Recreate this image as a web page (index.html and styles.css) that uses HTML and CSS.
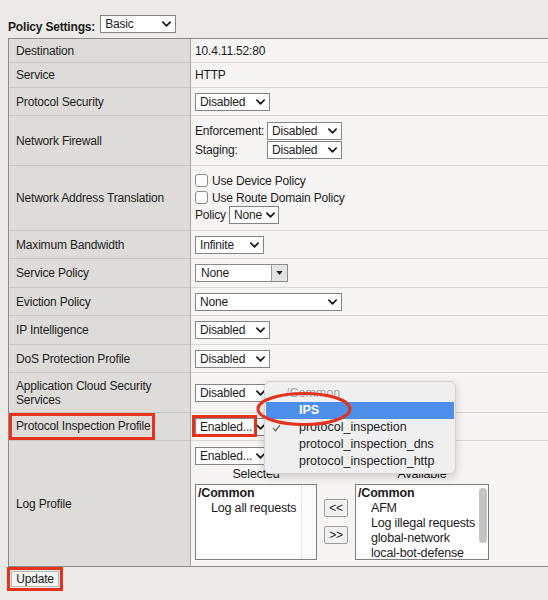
FILE: index.html
```html
<!DOCTYPE html>
<html>
<head>
<meta charset="utf-8">
<link rel="stylesheet" href="styles.css">
</head>
<body>
<div class="page">
  <div class="header">
    <span class="hlabel">Policy Settings:</span>
    <span class="sel w76"><span>Basic</span><svg class="chev" viewBox="0 0 10 6"><path d="M1 1l4 4 4-4"/></svg></span>
  </div>

  <div class="grid">
    <div class="lc">Destination</div>
    <div class="rc">10.4.11.52:80</div>

    <div class="lc">Service</div>
    <div class="rc">HTTP</div>

    <div class="lc">Protocol Security</div>
    <div class="rc"><span class="sel w75"><span>Disabled</span><svg class="chev" viewBox="0 0 10 6"><path d="M1 1l4 4 4-4"/></svg></span></div>

    <div class="lc">Network Firewall</div>
    <div class="rc">
      <div class="nf">
        <span>Enforcement:</span>
        <span class="sel w75"><span>Disabled</span><svg class="chev" viewBox="0 0 10 6"><path d="M1 1l4 4 4-4"/></svg></span>
        <span>Staging:</span>
        <span class="sel w75"><span>Disabled</span><svg class="chev" viewBox="0 0 10 6"><path d="M1 1l4 4 4-4"/></svg></span>
      </div>
    </div>

    <div class="lc">Network Address Translation</div>
    <div class="rc">
      <div class="nat">
        <div class="cbrow"><span class="cb"></span><span>Use Device Policy</span></div>
        <div class="cbrow"><span class="cb"></span><span>Use Route Domain Policy</span></div>
        <div class="polrow"><span>Policy</span><span class="sel w50 tight"><span>None</span><svg class="chev" viewBox="0 0 10 6"><path d="M1 1l4 4 4-4"/></svg></span></div>
      </div>
    </div>

    <div class="lc">Maximum Bandwidth</div>
    <div class="rc"><span class="sel w69"><span>Infinite</span><svg class="chev" viewBox="0 0 10 6"><path d="M1 1l4 4 4-4"/></svg></span></div>

    <div class="lc">Service Policy</div>
    <div class="rc">
      <span class="combo"><span class="combo-text">None</span><span class="combo-btn"><svg class="tri" viewBox="0 0 8 5"><path d="M0 0h8L4 5z"/></svg></span></span>
    </div>

    <div class="lc">Eviction Policy</div>
    <div class="rc"><span class="sel w147"><span>None</span><svg class="chev" viewBox="0 0 10 6"><path d="M1 1l4 4 4-4"/></svg></span></div>

    <div class="lc">IP Intelligence</div>
    <div class="rc"><span class="sel w75"><span>Disabled</span><svg class="chev" viewBox="0 0 10 6"><path d="M1 1l4 4 4-4"/></svg></span></div>

    <div class="lc">DoS Protection Profile</div>
    <div class="rc"><span class="sel w75"><span>Disabled</span><svg class="chev" viewBox="0 0 10 6"><path d="M1 1l4 4 4-4"/></svg></span></div>

    <div class="lc two">Application Cloud Security<br>Services</div>
    <div class="rc"><span class="sel w75"><span>Disabled</span><svg class="chev" viewBox="0 0 10 6"><path d="M1 1l4 4 4-4"/></svg></span></div>

    <div class="lc"><span class="redbox">Protocol Inspection Profile</span></div>
    <div class="rc">
      <span class="selwrap">
        <span class="sel w75"><span>Enabled...</span><svg class="chev" viewBox="0 0 10 6"><path d="M1 1l4 4 4-4"/></svg></span>
        <span class="redover"></span>
      </span>
    </div>

    <div class="lc last">Log Profile</div>
    <div class="rc last log">
      <span class="sel w75"><span>Enabled...</span><svg class="chev" viewBox="0 0 10 6"><path d="M1 1l4 4 4-4"/></svg></span>
      <div class="lprow">
        <div class="lpcol c1">
          <div class="lplabel">Selected</div>
          <div class="listbox">
            <div class="lbitems">
              <div class="grp">/Common</div>
              <div class="itm">Log all requests</div>
            </div>
            <div class="track line"></div>
          </div>
        </div>
        <div class="lpbtns">
          <span class="mbtn">&lt;&lt;</span>
          <span class="mbtn">&gt;&gt;</span>
        </div>
        <div class="lpcol c3">
          <div class="lplabel">Available</div>
          <div class="listbox">
            <div class="lbitems">
              <div class="grp">/Common</div>
              <div class="itm">AFM</div>
              <div class="itm">Log illegal requests</div>
              <div class="itm">global-network</div>
              <div class="itm">local-bot-defense</div>
            </div>
            <div class="track"><span class="thumb"></span></div>
          </div>
        </div>
      </div>
    </div>
  </div>

  <div class="footer">
    <button class="ubtn">Update</button>
  </div>
</div>

<div class="popup">
  <div class="pitem grey">/Common</div>
  <div class="pitem hl">IPS</div>
  <div class="pitem"><svg class="check" viewBox="0 0 9 8"><path d="M1 4.2l2.6 2.6L8 1"/></svg>protocol_inspection</div>
  <div class="pitem">protocol_inspection_dns</div>
  <div class="pitem">protocol_inspection_http</div>
</div>
<svg class="ellipse" viewBox="0 0 98 36"><ellipse cx="49" cy="18" rx="46" ry="15.5"/></svg>
</body>
</html>
```

FILE: styles.css
```css
html, body {
  margin: 0;
  padding: 0;
}
body {
  background: #ebeae6;
  font-family: "Liberation Sans", Arial, sans-serif;
  font-size: 12px;
  letter-spacing: -0.18px;
  color: #1c1c1c;
  width: 548px;
  height: 600px;
  overflow: hidden;
  position: relative;
}
.page {
  padding: 15px 0 0 8px;
}
.header {
  display: flex;
  align-items: flex-end;
  gap: 5px;
  height: 18px;
  margin-bottom: 5px;
}
.hlabel {
  font-weight: bold;
  line-height: 14px;
  margin-bottom: -1px;
}

/* select look-alike */
.sel {
  display: inline-flex;
  align-items: center;
  justify-content: space-between;
  box-sizing: border-box;
  height: 18px;
  border: 1px solid #848484;
  background: #fff;
  padding: 0 4px 0 4px;
  line-height: 14px;
  flex: none;
}
.sel.tight { padding: 0 3px 0 4px; }
.chev {
  width: 9px;
  height: 6px;
  flex: none;
}
.chev path {
  fill: none;
  stroke: #1a1a1a;
  stroke-width: 1.9;
  stroke-linecap: round;
  stroke-linejoin: round;
}
.w50 { width: 50px; }
.w69 { width: 69px; }
.w75 { width: 75px; }
.w76 { width: 76px; }
.w147 { width: 147px; }

/* grid */
.grid {
  display: grid;
  width: 540px;
  grid-template-columns: 182px 1fr;
  grid-template-rows: 24px 25px 28px 50px 65px 28px 29px 28px 29px 28px 40px 28px 126px;
  border-top: 1px solid #8c8b88;
  border-left: 1px solid #8c8b88;
}
.lc, .rc {
  box-sizing: border-box;
  display: flex;
  align-items: center;
}
.lc {
  background: #dedcd9;
  border-right: 1px solid #a9a8a5;
  border-bottom: 1px solid #c8c7c3;
  padding-left: 7px;
}
.lc.two {
  line-height: 14px;
}
.rc {
  background: #f6f5f3;
  border-bottom: 1px solid #d9d8d4;
  padding-left: 4px;
}
.lc.last, .rc.last {
  border-bottom: 1px solid #8c8b88;
}

.nf {
  display: grid;
  grid-template-columns: 72px auto;
  row-gap: 1px;
  align-items: center;
}
.nat {
  display: flex;
  flex-direction: column;
}
.cbrow {
  display: flex;
  align-items: center;
  height: 17px;
  gap: 4px;
}
.cb {
  width: 13px;
  height: 13px;
  box-sizing: border-box;
  border: 1px solid #8a8a8a;
  border-radius: 3px;
  background: #fff;
}
.polrow {
  display: flex;
  align-items: center;
  gap: 3px;
  height: 18px;
}

.combo {
  display: inline-flex;
  box-sizing: border-box;
  width: 93px;
  height: 18px;
  border: 1px solid #8a8a8a;
  background: #fff;
}
.combo-text {
  flex: 1;
  padding-left: 5px;
  line-height: 16px;
}
.combo-btn {
  width: 15px;
  border-left: 1px solid #9a9a9a;
  background: #e3e3e3;
  display: flex;
  align-items: center;
  justify-content: center;
}
.tri {
  width: 7px;
  height: 4px;
}
.tri path { fill: #222; }

/* annotations */
.redbox {
  margin-left: -7px;
  border: 3px solid #e5321c;
  padding: 3px 1px 4px 4px;
  line-height: 14px;
}
.selwrap {
  position: relative;
  display: inline-flex;
}
.redover {
  position: absolute;
  left: -3px;
  top: -3px;
  width: 65px;
  height: 22px;
  box-sizing: border-box;
  border: 3px solid #e5321c;
}

/* log profile */
.rc.log {
  flex-direction: column;
  align-items: flex-start;
  justify-content: flex-start;
  padding-top: 6px;
}
.lprow {
  display: flex;
  align-items: flex-start;
  margin-top: 2px;
}
.lpcol {
  display: flex;
  flex-direction: column;
}
.lpcol.c1 { width: 122px; }
.lpcol.c3 { width: 134px; margin-left: 7px; }
.lplabel {
  text-align: center;
  line-height: 14px;
  font-size: 12.5px;
  margin-bottom: 3px;
}
.listbox {
  box-sizing: border-box;
  height: 76px;
  border: 1px solid #7e7e7e;
  background: #fff;
  display: flex;
  overflow: hidden;
}
.lbitems {
  flex: 1;
  padding: 1px 0 0 2px;
  line-height: 15px;
  font-size: 12.5px;
  white-space: nowrap;
}
.grp { font-weight: bold; }
.itm { padding-left: 13px; }
.track {
  width: 14px;
  flex: none;
  position: relative;
}
.track.line {
  border-left: 1px solid #e3e3e3;
  background: #fbfbfb;
}
.thumb {
  position: absolute;
  left: 4px;
  top: 3px;
  width: 8px;
  height: 55px;
  border-radius: 4px;
  background: #c4c4c4;
}
.lpbtns {
  display: flex;
  flex-direction: column;
  gap: 9px;
  padding-top: 32px;
  margin-left: 7px;
}
.mbtn {
  box-sizing: border-box;
  width: 24px;
  height: 18px;
  border: 1px solid #9c9c9c;
  border-radius: 2px;
  background: #f2f2f2;
  display: flex;
  align-items: center;
  justify-content: center;
  font-size: 12px;
}

.footer {
  padding: 4px 0 0 3px;
}
.ubtn {
  font-family: "Liberation Sans", Arial, sans-serif;
  font-size: 12px;
  letter-spacing: -0.18px;
  color: #1c1c1c;
  height: 16px;
  width: 48px;
  padding: 0;
  border: 1px solid #b8b8b8;
  background: #f3f3f3;
  line-height: 14px;
  outline: 3px solid #e5321c;
  outline-offset: 1px;
  display: block;
}

/* popup menu overlay */
.popup {
  position: absolute;
  left: 264px;
  top: 381px;
  width: 192px;
  height: 93px;
  box-sizing: border-box;
  padding: 3px 1px;
  border: 1px solid #d2d2d2;
  border-radius: 6px;
  background: #efefef;
  box-shadow: 0 3px 10px rgba(0,0,0,0.18);
  font-size: 12.5px;
  letter-spacing: 0;
  color: #222;
}
.pitem {
  height: 17px;
  line-height: 17px;
  padding-left: 33px;
  position: relative;
  white-space: nowrap;
}
.pitem.grey {
  color: #a6a6a6;
  padding-left: 20px;
}
.pitem.hl {
  background: #4f8fec;
  color: #fff;
  font-weight: bold;
}
.check {
  position: absolute;
  left: 6px;
  top: 5px;
  width: 9px;
  height: 8px;
}
.check path {
  fill: none;
  stroke: #555;
  stroke-width: 1.2;
}
.ellipse {
  position: absolute;
  left: 255px;
  top: 391px;
  width: 98px;
  height: 36px;
  overflow: visible;
}
.ellipse ellipse {
  fill: none;
  stroke: #e5321c;
  stroke-width: 3;
}
```
